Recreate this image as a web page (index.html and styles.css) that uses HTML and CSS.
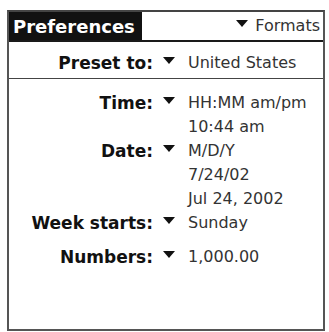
FILE: index.html
```html
<!DOCTYPE html>
<html>
<head>
<meta charset="utf-8">
<link rel="stylesheet" href="styles.css">
</head>
<body>
<div class="frame">
  <div class="header">
    <div class="title">Preferences</div>
    <div class="menu"><svg class="arrow" width="12" height="7" viewBox="0 0 12 7"><polygon points="0,0 12,0 6,7" fill="#111"/></svg> Formats</div>
  </div>
  <div class="preset field">
    <div class="label">Preset to:</div>
    <div class="pick"><svg class="arrow" width="12" height="7" viewBox="0 0 12 7"><polygon points="0,0 12,0 6,7" fill="#111"/></svg></div>
    <div class="values"><div>United States</div></div>
  </div>
  <div class="fields">
    <div class="field">
      <div class="label">Time:</div>
      <div class="pick"><svg class="arrow" width="12" height="7" viewBox="0 0 12 7"><polygon points="0,0 12,0 6,7" fill="#111"/></svg></div>
      <div class="values"><div>HH:MM am/pm</div><div>10:44 am</div></div>
    </div>
    <div class="field">
      <div class="label">Date:</div>
      <div class="pick"><svg class="arrow" width="12" height="7" viewBox="0 0 12 7"><polygon points="0,0 12,0 6,7" fill="#111"/></svg></div>
      <div class="values"><div>M/D/Y</div><div>7/24/02</div><div>Jul 24, 2002</div></div>
    </div>
    <div class="field">
      <div class="label">Week starts:</div>
      <div class="pick"><svg class="arrow" width="12" height="7" viewBox="0 0 12 7"><polygon points="0,0 12,0 6,7" fill="#111"/></svg></div>
      <div class="values"><div>Sunday</div></div>
    </div>
    <div class="field numbers">
      <div class="label">Numbers:</div>
      <div class="pick"><svg class="arrow" width="12" height="7" viewBox="0 0 12 7"><polygon points="0,0 12,0 6,7" fill="#111"/></svg></div>
      <div class="values"><div>1,000.00</div></div>
    </div>
  </div>
</div>
</body>
</html>
```
FILE: styles.css
```css
html, body {
  margin: 0;
  padding: 0;
  background: #fff;
}
body {
  width: 329px;
  height: 332px;
  overflow: hidden;
  font-family: "DejaVu Sans", sans-serif;
  color: #222;
}
.frame {
  box-sizing: border-box;
  margin: 10px 0 0 7px;
  width: 318px;
  height: 321px;
  border: 2px solid #555;
  border-top-color: #444;
}
.header {
  display: flex;
  justify-content: space-between;
  height: 28px;
  border-bottom: 2px solid #1a1a1a;
}
.title {
  background: #111;
  color: #fff;
  font-weight: bold;
  font-size: 18px;
  line-height: 28px;
  width: 133px;
  box-sizing: border-box;
  padding-left: 4px;
  padding-top: 1px;
}
.menu {
  font-size: 16px;
  line-height: 28px;
  padding-right: 3px;
  color: #333;
}
.menu .arrow {
  margin-right: 2px;
}
.arrow {
  display: inline-block;
  vertical-align: 4px;
}
.field {
  display: grid;
  grid-template-columns: 144px 35px 1fr;
  line-height: 24px;
}
.label {
  text-align: right;
  font-weight: bold;
  font-size: 17px;
  color: #111;
}
.pick {
  font-size: 16px;
  padding-left: 10px;
}
.values {
  font-size: 16px;
  color: #333;
}
.preset {
  box-sizing: border-box;
  height: 37px;
  padding-top: 9px;
  border-bottom: 1px solid #444;
}
.fields {
  padding-top: 12px;
}
.numbers {
  margin-top: 10px;
}
```
